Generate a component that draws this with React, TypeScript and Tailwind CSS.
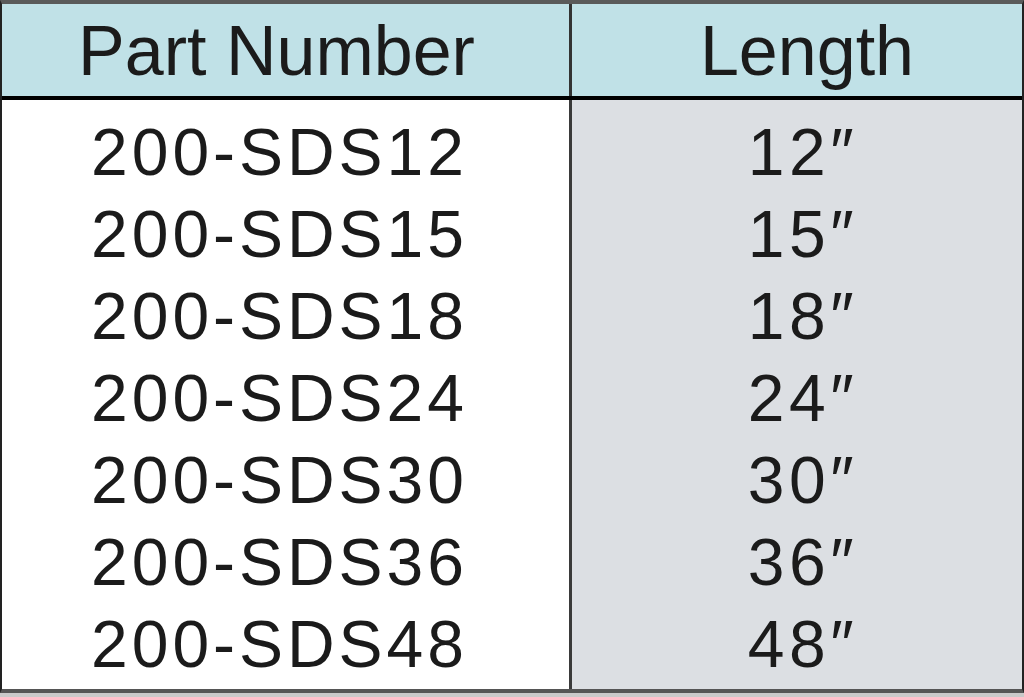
const ROWS: Array<{ part: string; length: string }> = [
  { part: '200-SDS12', length: '12″' },
  { part: '200-SDS15', length: '15″' },
  { part: '200-SDS18', length: '18″' },
  { part: '200-SDS24', length: '24″' },
  { part: '200-SDS30', length: '30″' },
  { part: '200-SDS36', length: '36″' },
  { part: '200-SDS48', length: '48″' },
];

export default function App() {
  return (
    <div
      className="flex h-[697px] w-[1024px] flex-col bg-[#c9c9c9] text-[#1b1b1b]"
      style={{ fontFamily: '"Liberation Sans", Arial, sans-serif' }}
    >
      <div className="flex h-[693px] flex-col border-x-[2px] border-t-[4px] border-b-[4px] border-x-[#222] border-t-[#5a5a5a] border-b-[#555]">
        {/* header */}
        <div className="grid h-[96px] grid-cols-[567px_3px_1fr] border-b-[4px] border-black bg-[#c0e1e7]">
          <div className="flex items-center justify-center pr-[18px] pt-[2px] text-[70px] leading-none">Part Number</div>
          <div className="bg-[#333]" />
          <div className="flex items-center justify-center pl-[20px] pt-[2px] text-[70px] leading-none">Length</div>
        </div>

        {/* body */}
        <div className="grid flex-1 grid-cols-[567px_3px_1fr]">
          <div className="flex flex-col bg-white pt-[11px]">
            {ROWS.map((r) => (
              <div
                key={r.part}
                className="flex h-[82px] items-center justify-center pr-[12px] text-[66px] leading-none tracking-[0.06em]"
              >
                {r.part}
              </div>
            ))}
          </div>
          <div className="bg-[#3a3a3a]" />
          <div className="flex flex-col bg-[#dcdfe3] pt-[11px]">
            {ROWS.map((r) => (
              <div
                key={r.part}
                className="flex h-[82px] items-center justify-center pl-[12px] text-[66px] leading-none tracking-[0.07em]"
              >
                {r.length}
              </div>
            ))}
          </div>
        </div>
      </div>
    </div>
  );
}
